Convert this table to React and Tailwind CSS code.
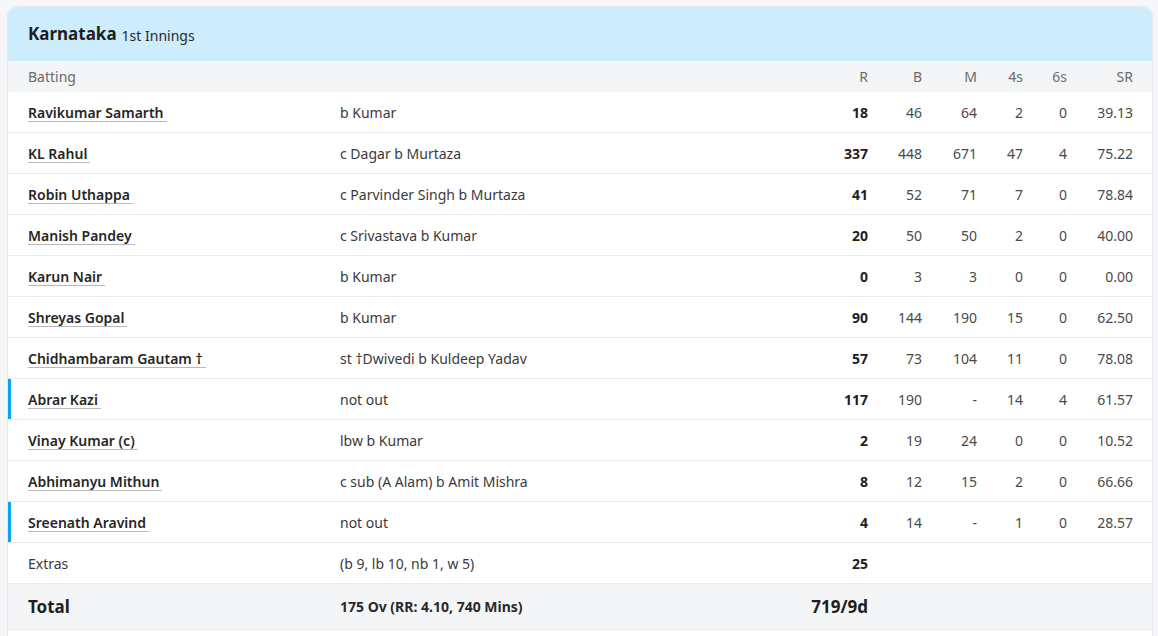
const batters = [
  { name: 'Ravikumar Samarth', out: 'b Kumar', r: 18, b: 46, m: 64, f: 2, s: 0, sr: '39.13' },
  { name: 'KL Rahul', out: 'c Dagar b Murtaza', r: 337, b: 448, m: 671, f: 47, s: 4, sr: '75.22' },
  { name: 'Robin Uthappa', out: 'c Parvinder Singh b Murtaza', r: 41, b: 52, m: 71, f: 7, s: 0, sr: '78.84' },
  { name: 'Manish Pandey', out: 'c Srivastava b Kumar', r: 20, b: 50, m: 50, f: 2, s: 0, sr: '40.00' },
  { name: 'Karun Nair', out: 'b Kumar', r: 0, b: 3, m: 3, f: 0, s: 0, sr: '0.00' },
  { name: 'Shreyas Gopal', out: 'b Kumar', r: 90, b: 144, m: 190, f: 15, s: 0, sr: '62.50' },
  { name: 'Chidhambaram Gautam †', out: 'st †Dwivedi b Kuldeep Yadav', r: 57, b: 73, m: 104, f: 11, s: 0, sr: '78.08' },
  { name: 'Abrar Kazi', out: 'not out', r: 117, b: 190, m: '-', f: 14, s: 4, sr: '61.57', notOut: true },
  { name: 'Vinay Kumar (c)', out: 'lbw b Kumar', r: 2, b: 19, m: 24, f: 0, s: 0, sr: '10.52' },
  { name: 'Abhimanyu Mithun', out: 'c sub (A Alam) b Amit Mishra', r: 8, b: 12, m: 15, f: 2, s: 0, sr: '66.66' },
  { name: 'Sreenath Aravind', out: 'not out', r: 4, b: 14, m: '-', f: 1, s: 0, sr: '28.57', notOut: true },
];

const cols = 'grid grid-cols-[312px_1fr_60px_54px_55px_46px_44px_66px] items-center pl-5 pr-[19px]';

function BatterRow({ p }) {
  return (
    <div
      className={`${cols} h-[41px] border-b border-[#ececee] text-[14px] ${
        p.notOut ? 'shadow-[inset_3px_0_0_#0aa5f0]' : ''
      }`}
    >
      <div>
        <span className="inline-block font-semibold text-[#262626] border-b border-[#b9b9bd] leading-[17px] pr-[3px]">
          {p.name}
        </span>
      </div>
      <div className="text-[#3a3a3a]">{p.out}</div>
      <div className="text-right font-bold text-[#1e1e1e]">{p.r}</div>
      <div className="text-right text-[#4a4a4a]">{p.b}</div>
      <div className="text-right text-[#4a4a4a]">{p.m}</div>
      <div className="text-right text-[#4a4a4a]">{p.f}</div>
      <div className="text-right text-[#4a4a4a]">{p.s}</div>
      <div className="text-right text-[#4a4a4a]">{p.sr}</div>
    </div>
  );
}

export default function App() {
  return (
    <div className="min-h-screen bg-[#f7f7f9] pt-[6px] pl-[7px] pr-[5px] font-['Noto_Sans',sans-serif]">
      <div className="bg-white border border-[#e6e6ea] rounded-t-[10px] overflow-hidden">
        <div className="h-[54px] bg-[#cdedfd] flex items-center pl-5 gap-[5px]">
          <span className="text-[17px] font-bold text-[#1e1e1e]">Karnataka</span>
          <span className="text-[14px] text-[#2a2a2a] mt-[2px]">1st Innings</span>
        </div>
        <div className={`${cols} h-[31px] bg-[#f4f5f7] text-[14px] text-[#6b6b6b]`}>
          <div>Batting</div>
          <div></div>
          <div className="text-right">R</div>
          <div className="text-right">B</div>
          <div className="text-right">M</div>
          <div className="text-right">4s</div>
          <div className="text-right">6s</div>
          <div className="text-right">SR</div>
        </div>
        {batters.map((p) => (
          <BatterRow key={p.name} p={p} />
        ))}
        <div className={`${cols} h-[41px] border-b border-[#ececee] text-[14px]`}>
          <div className="text-[#3a3a3a]">Extras</div>
          <div className="text-[#3a3a3a]">(b 9, lb 10, nb 1, w 5)</div>
          <div className="text-right font-bold text-[#1e1e1e]">25</div>
        </div>
        <div className={`${cols} h-[46px] bg-[#f4f5f7] border-b border-[#ececee]`}>
          <div className="text-[17px] font-bold text-[#1e1e1e]">Total</div>
          <div className="text-[14px] font-bold text-[#2a2a2a]">175 Ov (RR: 4.10, 740 Mins)</div>
          <div className="text-right text-[17px] font-bold text-[#1e1e1e]">719/9d</div>
        </div>
        <div className="h-[20px]"></div>
      </div>
    </div>
  );
}
